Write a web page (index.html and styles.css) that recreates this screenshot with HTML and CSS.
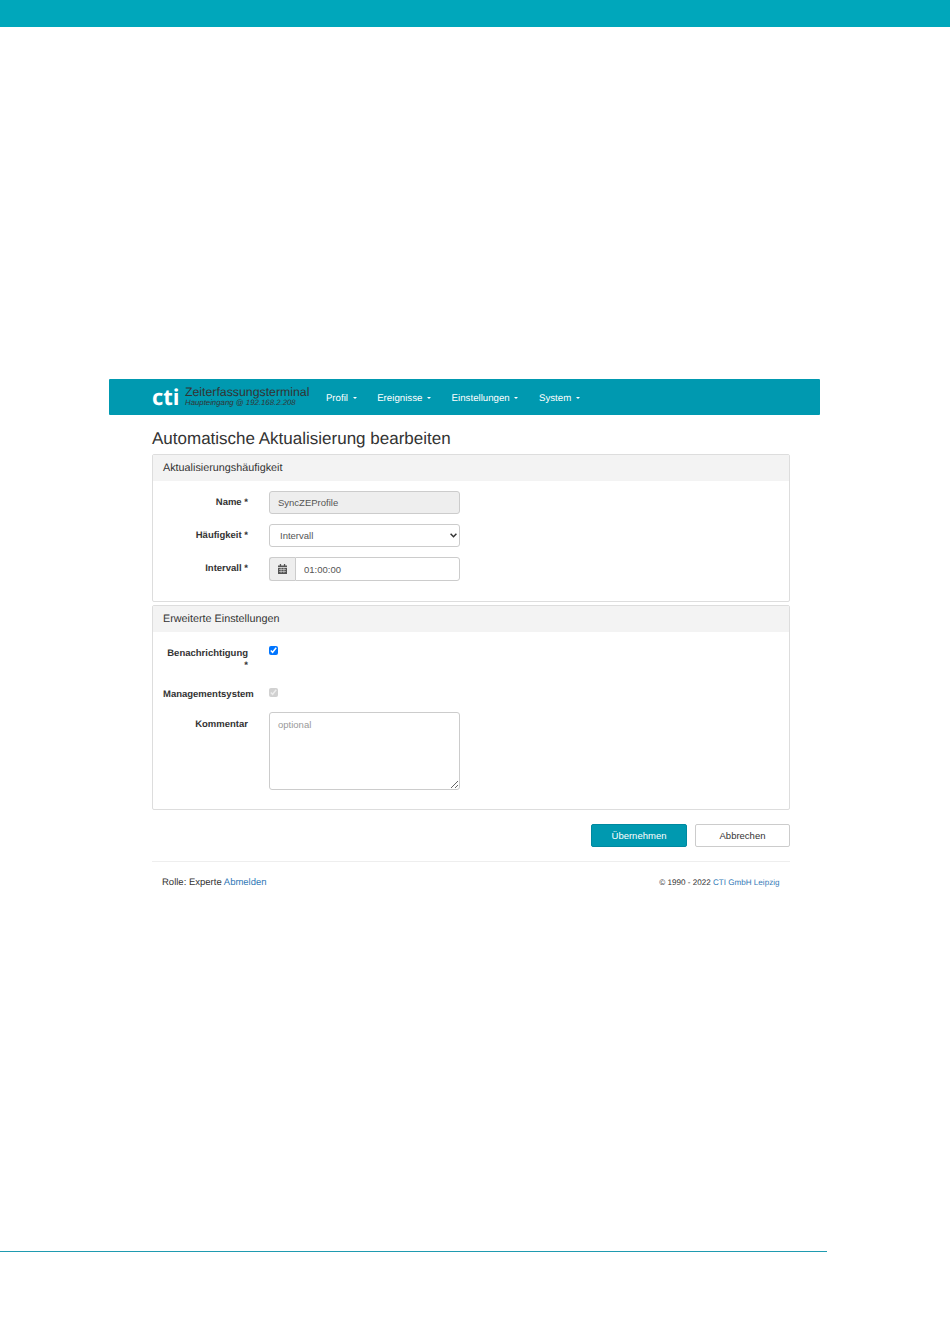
FILE: index.html
```html
<!DOCTYPE html>
<html>
<head>
  <title>Automatische Aktualisierung bearbeiten</title>
  <meta charset="UTF-8">
  <meta name="viewport" content="width=device-width, initial-scale=1">
  <link rel="stylesheet" href="styles.css">
</head>
<body>
  <div class="top-band"></div>

  <div class="screen">
    <nav class="navbar">
      <span class="logo">cti</span>
      <div class="brand">
        <div class="brand-title">Zeiterfassungsterminal</div>
        <div class="brand-sub">Haupteingang @ 192.168.2.208</div>
      </div>
      <ul class="menu">
        <li>Profil <span class="caret"></span></li>
        <li>Ereignisse <span class="caret"></span></li>
        <li>Einstellungen <span class="caret"></span></li>
        <li>System <span class="caret"></span></li>
      </ul>
    </nav>

    <div class="content">
      <h1>Automatische Aktualisierung bearbeiten</h1>

      <section class="panel panel-first">
        <div class="panel-head">Aktualisierungshäufigkeit</div>
        <div class="panel-body">
          <div class="row">
            <label>Name *</label>
            <input class="field" type="text" value="SyncZEProfile" disabled>
          </div>
          <div class="row">
            <label>Häufigkeit *</label>
            <div class="select-wrap">
              <select class="field">
                <option>Intervall</option>
              </select>
              <svg class="chevron" width="7" height="5" viewBox="0 0 7 5">
                <path fill="none" stroke="#333" stroke-width="1.5" d="M.6 .8l2.900 2.900 2.900-2.900"/>
              </svg>
            </div>
          </div>
          <div class="row">
            <label>Intervall *</label>
            <div class="input-group">
              <span class="addon">
                <svg width="9" height="10" viewBox="0 0 9 10">
                  <path fill="#555" d="M0 1.500h9V10H0z"/>
                  <path fill="#555" d="M1.800 0h1.300v2H1.800zM5.900 0h1.300v2H5.900z"/>
                  <path fill="#eee" d="M0 3h9v.7H0zM1 5.200h7v.5H1zM1 7.300h7v.5H1zM2.800 3.700h.5v5.300h-.5zM5.700 3.700h.5v5.300h-.5z"/>
                </svg>
              </span>
              <input class="field field-addon" type="text" value="01:00:00">
            </div>
          </div>
        </div>
      </section>

      <section class="panel panel-second">
        <div class="panel-head">Erweiterte Einstellungen</div>
        <div class="panel-body">
          <div class="row row-check">
            <label>Benachrichtigung *</label>
            <input class="check" type="checkbox" checked>
          </div>
          <div class="row row-check row-manage">
            <label>Managementsystem</label>
            <input class="check" type="checkbox" checked disabled>
          </div>
          <div class="row">
            <label class="label-comment">Kommentar</label>
            <textarea class="field comment" placeholder="optional"></textarea>
          </div>
        </div>
      </section>

      <div class="actions">
        <button class="btn btn-primary">Übernehmen</button>
        <button class="btn">Abbrechen</button>
      </div>

      <footer class="footer">
        <div>Rolle: Experte <a href="#">Abmelden</a></div>
        <div class="copyright">© 1990 - 2022 <a href="#">CTI GmbH Leipzig</a></div>
      </footer>
    </div>
  </div>

  <div class="page-rule"></div>
</body>
</html>
```

FILE: styles.css
```css
body {
  margin: 0;
  background: #fff;
  font-family: "Liberation Sans", Arial, sans-serif;
  font-size: 9.5px;
  color: #333;
  text-rendering: geometricPrecision;
}
.top-band {
  height: 27px;
  background: #00a7bb;
}
.screen {
  width: 711px;
  margin: 352px 0 0 109px;
}
.navbar {
  display: flex;
  align-items: center;
  height: 36px;
  padding-left: 43px;
  background: #0099b0;
  border-radius: 1px;
}
.logo {
  width: 33px;
  font-family: "Open Sans", sans-serif;
  font-size: 22px;
  font-weight: 700;
  line-height: 36px;
  color: #fff;
}
.brand {
  margin-top: -2px;
}
.brand-title {
  font-size: 12.3px;
  line-height: 12px;
  color: #333;
}
.brand-sub {
  font-size: 7.8px;
  line-height: 9px;
  font-style: italic;
  color: #333;
}
.menu {
  display: flex;
  gap: 20.500px;
  margin: 2px 0 0 16.500px;
  padding: 0;
  list-style: none;
  font-size: 9.7px;
  color: #fff;
}
.caret {
  display: inline-block;
  margin-left: 2px;
  vertical-align: middle;
  border-top: 2px solid #fff;
  border-left: 2.500px solid transparent;
  border-right: 2.500px solid transparent;
}
.content {
  width: 638px;
  margin-left: 43px;
}
h1 {
  margin: 0;
  padding: 12px 0 3px;
  font-size: 17px;
  font-weight: 400;
  line-height: 24px;
  color: #333;
}
.panel {
  border: 1px solid #ddd;
  border-radius: 2px;
}
.panel-head {
  height: 26px;
  padding-left: 10px;
  background: #f3f3f3;
  font-size: 10.8px;
  line-height: 27px;
}
.panel-first {
  height: 148px;
  box-sizing: border-box;
}
.panel-second {
  height: 205px;
  margin-top: 3px;
  box-sizing: border-box;
}
.panel-first .panel-body {
  padding-top: 10px;
}
.panel-second .panel-body {
  padding-top: 14px;
}
.row {
  display: flex;
  margin-bottom: 10px;
}
label {
  flex: none;
  box-sizing: border-box;
  width: 85px;
  margin-left: 10px;
  margin-right: 21px;
  padding-top: 6px;
  text-align: right;
  font-weight: 700;
  line-height: 12px;
}
.field {
  box-sizing: border-box;
  width: 191px;
  height: 23px;
  margin: 0;
  padding: 0 8px;
  border: 1px solid #ccc;
  border-radius: 3px;
  background: #fff;
  font-family: inherit;
  font-size: 9.5px;
  color: #555;
}
.field:disabled {
  background: #eee;
}
.select-wrap {
  position: relative;
  width: 191px;
}
select.field {
  appearance: none;
  display: block;
  padding-left: 10px;
}
.chevron {
  position: absolute;
  top: 9px;
  right: 3px;
}
.input-group {
  display: flex;
  width: 191px;
}
.addon {
  display: flex;
  flex: none;
  align-items: center;
  justify-content: center;
  box-sizing: border-box;
  width: 26px;
  height: 24px;
  border: 1px solid #ccc;
  border-right: none;
  border-radius: 3px 0 0 3px;
  background: #eee;
}
.field-addon {
  flex: 1;
  width: auto;
  height: 24px;
  border-radius: 0 3px 3px 0;
}
.row-check {
  height: 32px;
  margin-bottom: 10px;
}
.row-manage {
  height: 14px;
}
.row-check label {
  padding-top: 2px;
}
.row-manage label {
  padding-top: 1px;
}
.label-comment {
  padding-top: 7px;
}
.check {
  width: 9px;
  height: 9px;
  margin: 0;
}
.comment {
  height: 78px;
  padding-top: 6px;
  resize: both;
}
.comment::placeholder {
  color: #999;
}
.actions {
  display: flex;
  justify-content: flex-end;
  gap: 8px;
  margin-top: 14px;
}
.btn {
  box-sizing: border-box;
  width: 95px;
  height: 23px;
  padding: 0;
  border: 1px solid #ccc;
  border-radius: 2px;
  background: #fff;
  font-family: inherit;
  font-size: 9.5px;
  color: #333;
}
.btn-primary {
  width: 96px;
  border-color: #0089a0;
  background: #0099b0;
  color: #fff;
}
.footer {
  display: flex;
  justify-content: space-between;
  align-items: center;
  height: 40px;
  margin-top: 14px;
  padding: 0 10.500px 0 10px;
  border-top: 1px solid #eee;
}
.footer a {
  color: #337ab7;
  text-decoration: none;
}
.copyright {
  font-size: 8.1px;
}
.page-rule {
  width: 827px;
  height: 1px;
  margin-top: 349px;
  background: #1f9bb0;
}
```
